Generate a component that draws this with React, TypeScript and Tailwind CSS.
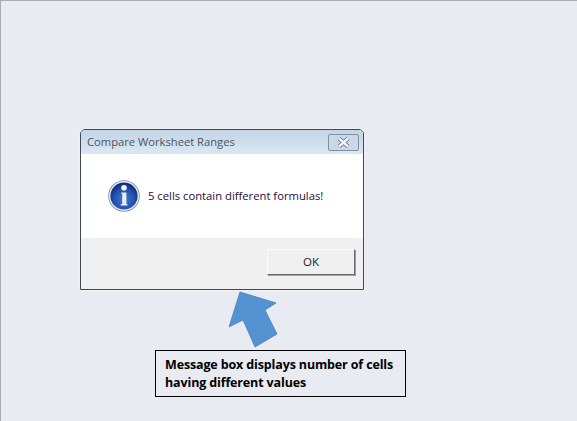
export default function App() {
  return (
    <div
      className="w-[577px] h-[421px] overflow-hidden bg-[#e8ebf1] border-t border-l border-[#a9acb2] pt-[128px] pl-[79px]"
      style={{ fontFamily: '"Open Sans", sans-serif' }}
    >
      {/* Message box */}
      <div className="w-[284px] h-[161px] flex flex-col bg-white border border-[#3f4a55] rounded-t-[5px] shadow-[0_0_2px_#ffffff]">
        <div className="h-[24px] shrink-0 flex items-center justify-between pl-[6px] pr-[4px] rounded-t-[4px] bg-gradient-to-b from-[#c3d4e6] to-[#dbe7f3]">
          <span className="text-[11.2px] leading-none text-[#4a5560]">Compare Worksheet Ranges</span>
          <div className="w-[31px] h-[17px] flex items-center justify-center rounded-[2px] border border-[#7f8fa3] bg-[#cbd8e6]">
            <svg width="13" height="11" viewBox="0 0 13 11">
              <path d="M2 1.5 L11 9.5 M11 1.5 L2 9.5" stroke="#5d6670" strokeWidth="4" />
              <path d="M2 1.5 L11 9.5 M11 1.5 L2 9.5" stroke="#f4f6f8" strokeWidth="2.4" />
            </svg>
          </div>
        </div>

        <div className="h-[84px] shrink-0 flex items-center pl-[27px] gap-[8px] pb-[1px]">
          <svg width="32" height="32" viewBox="0 0 32 32" className="shrink-0">
            <defs>
              <radialGradient id="disc" cx="50%" cy="62%" r="58%">
                <stop offset="0%" stopColor="#3f7bd6" />
                <stop offset="65%" stopColor="#2450ac" />
                <stop offset="100%" stopColor="#142a78" />
              </radialGradient>
            </defs>
            <circle cx="16" cy="16" r="15.8" fill="#7f8fae" />
            <circle cx="16" cy="16" r="15" fill="#e6eaf2" />
            <circle cx="16" cy="16" r="13.6" fill="url(#disc)" />
            <circle cx="16" cy="7.8" r="2.8" fill="#f4f6fa" />
            <path d="M13.4 12.4 H18.4 V24 H19.4 V25.6 H12.8 V24 H14.2 V14 H13.4 Z" fill="#e9ecf2" />
          </svg>
          <span className="text-[11.25px] leading-none text-[#2a0a3a]">5 cells contain different formulas!</span>
        </div>

        <div className="flex-1 flex items-start justify-end pt-[11px] pr-[8px] bg-[#f0f0f0]">
          <button className="w-[88px] h-[26px] flex items-center justify-center bg-[#f0f0f0] border border-[#fbfbfb] border-r-[#696969] border-b-[#696969] shadow-[1px_1px_0_#a0a0a0] text-[11.5px] text-[#222222]">
            OK
          </button>
        </div>
      </div>

      {/* Pointer arrow */}
      <svg width="60" height="58" viewBox="0 0 60 58" className="block ml-[149px] mt-[1px]">
        <polygon
          points="11,1 47,12 36,19 48,43 26,56 14,29 0,36"
          fill="#5592d2"
          stroke="#4a7fb8"
          strokeWidth="0.8"
        />
      </svg>

      {/* Caption */}
      <div className="w-[251px] h-[47px] ml-[75px] mt-[1px] flex items-center pl-[9px] border border-black bg-[#e8ebf1]">
        <p className="text-[12.5px] tracking-[-0.14px] leading-[18px] font-bold text-black">
          Message box displays number of cells
          <br />
          having different values
        </p>
      </div>
    </div>
  );
}
